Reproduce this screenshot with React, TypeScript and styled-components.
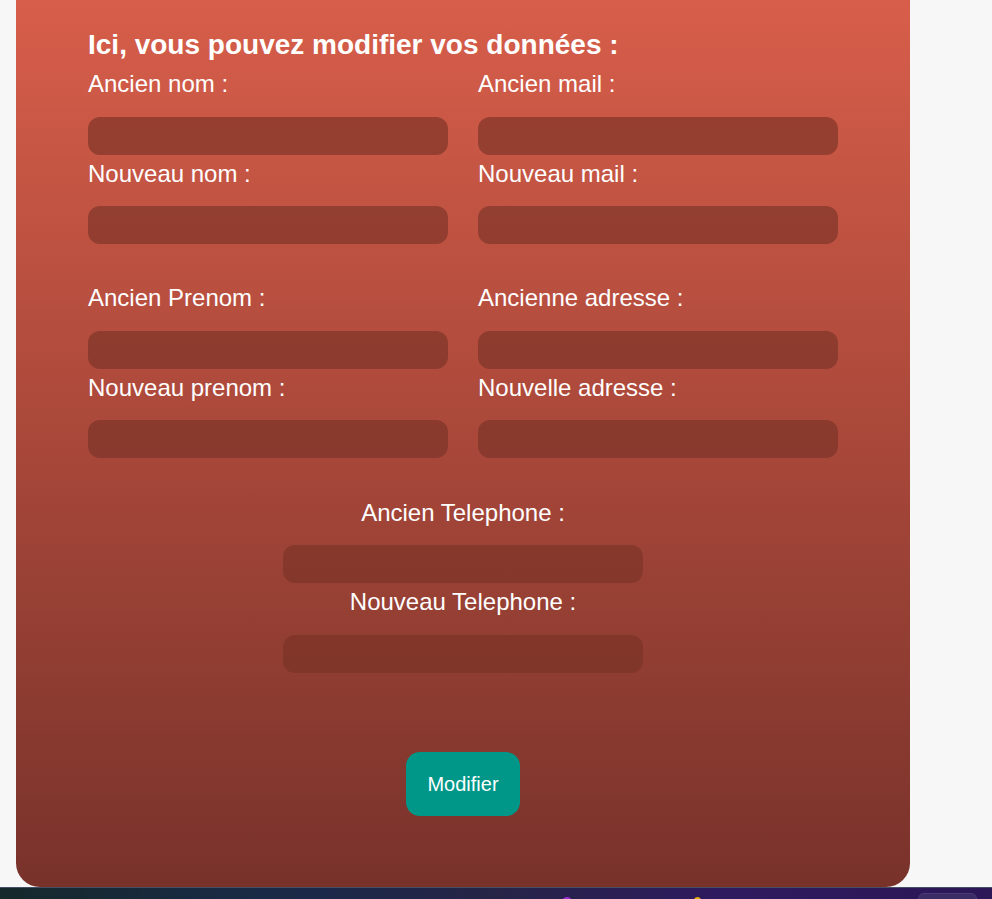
import React from "react";
import styled, { createGlobalStyle } from "styled-components";

const Global = createGlobalStyle`
  html, body {
    margin: 0;
    padding: 0;
    height: 100%;
    overflow: hidden;
    background: #f7f7f7;
  }
  body {
    font-family: "Liberation Sans", Arial, sans-serif;
  }
  #root {
    height: 100%;
  }
  * {
    box-sizing: border-box;
  }
`;

const Screen = styled.div`
  height: 100vh;
  display: flex;
  flex-direction: column;
`;

const Viewport = styled.main`
  flex: 1;
  min-height: 0;
  display: flex;
  padding-left: 16px;
`;

const Card = styled.section`
  width: 894px;
  height: 100%;
  display: flex;
  flex-direction: column;
  padding: 28.5px 72px 0;
  border-radius: 0 0 24px 24px;
  background: linear-gradient(180deg, #d75e4a 0%, #b24c3d 40%, #78322a 100%);
`;

const Title = styled.h2`
  margin: 0 0 8.5px;
  font-size: 28px;
  line-height: 32px;
  font-weight: 700;
  color: #ffffff;
`;

const Grid = styled.div<{ $after: number }>`
  display: grid;
  grid-template-columns: 360px 360px;
  column-gap: 30px;
  row-gap: 4px;
  margin-bottom: ${(p) => p.$after}px;
`;

const Centered = styled.div`
  width: 360px;
  align-self: center;
  display: flex;
  flex-direction: column;
  gap: 4px;
`;

const Field = styled.div<{ $center?: boolean }>`
  display: flex;
  flex-direction: column;
  gap: 17px;
  text-align: ${(p) => (p.$center ? "center" : "left")};
`;

const Label = styled.label`
  font-size: 24px;
  line-height: 30.6px;
  color: #ffffff;
`;

const Input = styled.input`
  display: block;
  width: 360px;
  height: 38px;
  border: none;
  outline: none;
  border-radius: 12px;
  padding: 0 14px;
  background: rgba(122, 50, 38, 0.65);
  color: #ffffff;
  font-family: inherit;
  font-size: 18px;
`;

const Button = styled.button`
  align-self: center;
  margin-top: 79px;
  height: 64px;
  padding: 0 21px;
  border: none;
  border-radius: 14px;
  background: #009688;
  color: #ffffff;
  font-family: "Liberation Sans", Arial, sans-serif;
  font-size: 20px;
  cursor: pointer;
`;

const Taskbar = styled.footer`
  height: 12px;
  flex: none;
  display: flex;
  align-items: flex-start;
  overflow: hidden;
  border-top: 1px solid #465064;
  background: linear-gradient(
    90deg,
    #15292b 0%,
    #182a40 20%,
    #1c2849 33%,
    #262447 50%,
    #2e1a5e 72%,
    #2c1757 100%
  );
`;

const TrayDot = styled.span<{ $x: number; $size: number; $top: number; $color: string }>`
  flex: none;
  margin-left: ${(p) => p.$x}px;
  margin-top: ${(p) => p.$top}px;
  width: ${(p) => p.$size}px;
  height: ${(p) => p.$size}px;
  border-radius: 50%;
  background: ${(p) => p.$color};
`;

const TrayTile = styled.span<{ $x: number }>`
  flex: none;
  margin-left: ${(p) => p.$x}px;
  margin-top: 5px;
  width: 59px;
  height: 14px;
  border-radius: 6px;
  background: #3b2c66;
  border: 1px solid #4a3b78;
`;

type Pair = [string, string];

const groupOne: Pair[] = [
  ["Ancien nom :", "Ancien mail :"],
  ["Nouveau nom :", "Nouveau mail :"],
];

const groupTwo: Pair[] = [
  ["Ancien Prenom :", "Ancienne adresse :"],
  ["Nouveau prenom :", "Nouvelle adresse :"],
];

function FieldGrid({ rows, after }: { rows: Pair[]; after: number }) {
  return (
    <Grid $after={after}>
      {rows.flatMap((row) =>
        row.map((label) => (
          <Field key={label}>
            <Label>{label}</Label>
            <Input type="text" />
          </Field>
        ))
      )}
    </Grid>
  );
}

export default function App() {
  return (
    <>
      <Global />
      <Screen>
        <Viewport>
          <Card>
            <Title>Ici, vous pouvez modifier vos données :</Title>
            <FieldGrid rows={groupOne} after={39} />
            <FieldGrid rows={groupTwo} after={39.5} />
            <Centered>
              <Field $center>
                <Label>Ancien Telephone :</Label>
                <Input type="text" />
              </Field>
              <Field $center>
                <Label>Nouveau Telephone :</Label>
                <Input type="text" />
              </Field>
            </Centered>
            <Button type="button">Modifier</Button>
          </Card>
        </Viewport>
        <Taskbar>
          <TrayDot $x={562} $size={10} $top={9} $color="#9b2bd2" />
          <TrayDot $x={122} $size={7} $top={9} $color="#e8b000" />
          <TrayTile $x={217} />
        </Taskbar>
      </Screen>
    </>
  );
}
